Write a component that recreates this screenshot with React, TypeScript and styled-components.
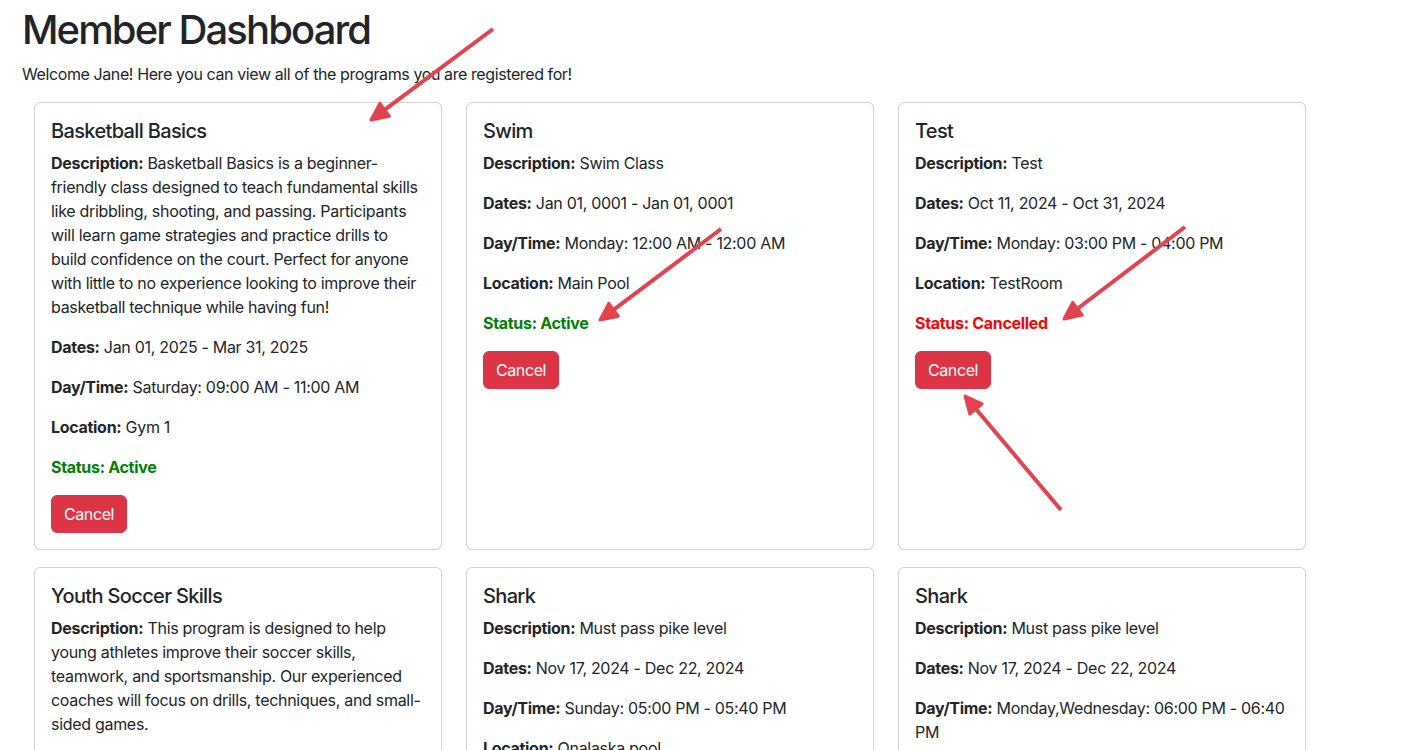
import React from 'react';
import styled, { createGlobalStyle } from 'styled-components';

const GlobalStyle = createGlobalStyle`
  html, body {
    margin: 0;
    padding: 0;
    background: #ffffff;
  }
  body {
    font-family: Inter, "Noto Sans", "Liberation Sans", sans-serif;
    font-size: 16px;
    line-height: 1.5;
    letter-spacing: -0.3px;
    color: #212529;
  }
  * {
    box-sizing: border-box;
  }
`;

type Status = 'Active' | 'Cancelled';

interface Program {
    name: string;
    description: string;
    dates: string;
    dayTime: string;
    location: string;
    status: Status;
}

const programs: Program[] = [
    {
        name: 'Basketball Basics',
        description:
            'Basketball Basics is a beginner-friendly class designed to teach fundamental skills like dribbling, shooting, and passing. Participants will learn game strategies and practice drills to build confidence on the court. Perfect for anyone with little to no experience looking to improve their basketball technique while having fun!',
        dates: 'Jan 01, 2025 - Mar 31, 2025',
        dayTime: 'Saturday: 09:00 AM - 11:00 AM',
        location: 'Gym 1',
        status: 'Active',
    },
    {
        name: 'Swim',
        description: 'Swim Class',
        dates: 'Jan 01, 0001 - Jan 01, 0001',
        dayTime: 'Monday: 12:00 AM - 12:00 AM',
        location: 'Main Pool',
        status: 'Active',
    },
    {
        name: 'Test',
        description: 'Test',
        dates: 'Oct 11, 2024 - Oct 31, 2024',
        dayTime: 'Monday: 03:00 PM - 04:00 PM',
        location: 'TestRoom',
        status: 'Cancelled',
    },
    {
        name: 'Youth Soccer Skills',
        description:
            'This program is designed to help young athletes improve their soccer skills, teamwork, and sportsmanship. Our experienced coaches will focus on drills, techniques, and small-sided games.',
        dates: 'Feb 01, 2025 - Apr 30, 2025',
        dayTime: 'Tuesday: 04:00 PM - 05:30 PM',
        location: 'Field 2',
        status: 'Active',
    },
    {
        name: 'Shark',
        description: 'Must pass pike level',
        dates: 'Nov 17, 2024 - Dec 22, 2024',
        dayTime: 'Sunday: 05:00 PM - 05:40 PM',
        location: 'Onalaska pool',
        status: 'Active',
    },
    {
        name: 'Shark',
        description: 'Must pass pike level',
        dates: 'Nov 17, 2024 - Dec 22, 2024',
        dayTime: 'Monday,Wednesday: 06:00 PM - 06:40 PM',
        location: 'Onalaska pool',
        status: 'Active',
    },
];

const Page = styled.div`
  position: relative;
  padding: 6px 22px 40px;
`;

const Title = styled.h1`
  margin: 0 0 8px;
  font-size: 40px;
  font-weight: 500;
  line-height: 1.2;
  letter-spacing: -1.9px;
`;

const Welcome = styled.p`
  margin: 0 0 16px;
  letter-spacing: -0.4px;
`;

const CardGrid = styled.div`
  display: grid;
  grid-template-columns: repeat(3, 408px);
  column-gap: 24px;
  row-gap: 17px;
  padding-left: 12px;
`;

const Card = styled.div`
  border: 1px solid rgba(0, 0, 0, 0.175);
  border-radius: 6px;
  background: #fff;
  padding: 16px;
`;

const CardTitle = styled.h5`
  margin: 0 0 8px;
  font-size: 20px;
  font-weight: 500;
  line-height: 1.2;
  letter-spacing: -0.65px;
`;

const Field = styled.p`
  margin: 0 0 16px;
`;

const Label = styled.strong`
  font-weight: 700;
`;

const StatusLine = styled.p<{ $status: Status }>`
  margin: 0 0 16px;
  font-weight: 700;
  color: ${(p) => (p.$status === 'Active' ? '#008000' : '#ff0000')};
`;

const CancelButton = styled.button`
  font-family: inherit;
  font-size: 16px;
  line-height: 1.5;
  letter-spacing: -0.4px;
  color: #fff;
  background: #dc3545;
  border: 1px solid #dc3545;
  border-radius: 6px;
  padding: 6px 12px;
  cursor: pointer;
`;

const Overlay = styled.svg`
  position: absolute;
  left: 0;
  top: 0;
  pointer-events: none;
`;

interface ArrowSpec {
    x1: number;
    y1: number;
    x2: number;
    y2: number;
}

const arrows: ArrowSpec[] = [
    { x1: 493, y1: 29, x2: 371, y2: 120 },
    { x1: 721, y1: 229, x2: 600, y2: 320 },
    { x1: 1185, y1: 227, x2: 1064, y2: 319 },
    { x1: 1061, y1: 510, x2: 965, y2: 396 },
];

const ARROW_RED = '#e2434f';

function Arrow({ x1, y1, x2, y2 }: ArrowSpec) {
    const dx = x2 - x1;
    const dy = y2 - y1;
    const len = Math.hypot(dx, dy);
    const ux = dx / len;
    const uy = dy / len;
    const headLen = 17;
    const headHalf = 8;
    const bx = x2 - ux * headLen;
    const by = y2 - uy * headLen;
    const px = -uy * headHalf;
    const py = ux * headHalf;
    return (
        <g>
            <line x1={x1} y1={y1} x2={bx + ux * 3} y2={by + uy * 3} stroke={ARROW_RED} strokeWidth={4} />
            <polygon
                points={`${x2},${y2} ${bx + px},${by + py} ${bx - px},${by - py}`}
                fill={ARROW_RED}
                stroke={ARROW_RED}
                strokeWidth={3}
                strokeLinejoin="round"
            />
        </g>
    );
}

function ProgramCard({ program }: { program: Program }) {
    return (
        <Card>
            <CardTitle>{program.name}</CardTitle>
            <Field>
                <Label>Description:</Label> {program.description}
            </Field>
            <Field>
                <Label>Dates:</Label> {program.dates}
            </Field>
            <Field>
                <Label>Day/Time:</Label> {program.dayTime}
            </Field>
            <Field>
                <Label>Location:</Label> {program.location}
            </Field>
            <StatusLine $status={program.status}>Status: {program.status}</StatusLine>
            <CancelButton>Cancel</CancelButton>
        </Card>
    );
}

export default function App() {
    return (
        <>
            <GlobalStyle />
            <Page>
                <Title>Member Dashboard</Title>
                <Welcome>Welcome Jane! Here you can view all of the programs you are registered for!</Welcome>
                <CardGrid>
                    {programs.map((p, i) => (
                        <ProgramCard key={i} program={p} />
                    ))}
                </CardGrid>
                <Overlay width={1422} height={750}>
                    {arrows.map((a, i) => (
                        <Arrow key={i} {...a} />
                    ))}
                </Overlay>
            </Page>
        </>
    );
}
